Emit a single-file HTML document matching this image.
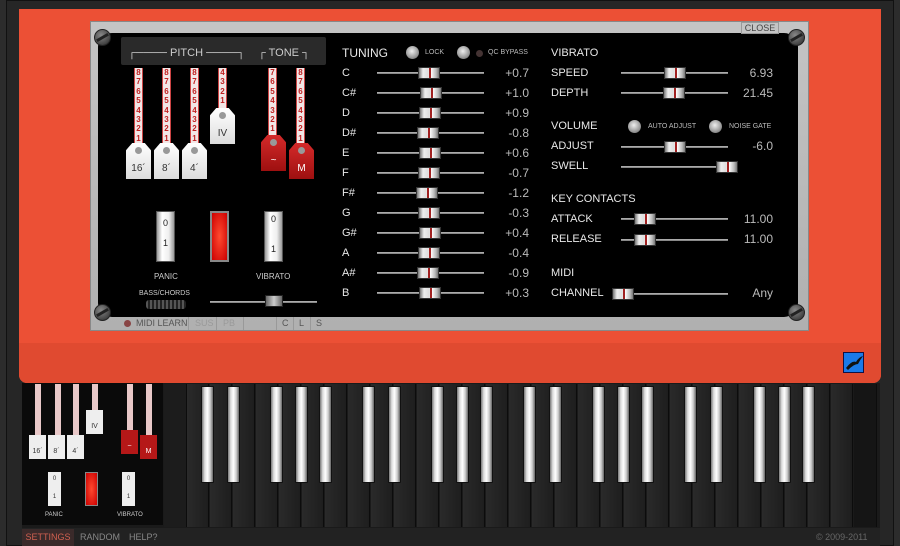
<!DOCTYPE html>
<html><head><meta charset="utf-8"><style>
*{margin:0;padding:0;box-sizing:border-box}
body{width:900px;height:546px;overflow:hidden;background:#2c2c2c;font-family:"Liberation Sans",sans-serif;position:relative}
.a{position:absolute}
.t{position:absolute;color:#e8e8e8;font-size:11px;line-height:12px}
.v{position:absolute;color:#bbb;font-size:12px;line-height:12px;text-align:right;width:60px}
.trk{position:absolute;height:2px;background:#888;border-top:1px solid #aaa}
.th{position:absolute;width:22px;height:12px;background:linear-gradient(90deg,#777,#eee 20%,#ddd 45%,#fff 60%,#bbb 85%,#777);border:1px solid #333}
.th:after{content:"";position:absolute;left:10px;top:0;width:2px;height:10px;background:#a02020}
.scr{position:absolute;width:17px;height:17px;border-radius:50%;background:radial-gradient(circle at 40% 35%,#888,#444 70%,#222);border:1px solid #222}
.scr:after{content:"";position:absolute;left:1px;top:6px;width:13px;height:3px;background:#222;transform:rotate(-30deg)}
.db{position:absolute;width:9px;background:#f2e6e6;border-left:1px solid #c44;border-right:1px solid #c44;color:#c02020;font-size:8px;line-height:9.4px;text-align:center;font-weight:bold}
.tab{position:absolute;width:25px;height:36px;background:linear-gradient(#fff,#ddd);clip-path:polygon(25% 0,75% 0,100% 20%,100% 100%,0 100%,0 20%);color:#333;font-size:10px;text-align:center;padding-top:20px}
.tab.r{background:linear-gradient(#d42a2a,#9e1010);color:#fff}
.tab:before{content:"";position:absolute;left:9px;top:4px;width:7px;height:7px;border-radius:50%;background:#999}
.sw{position:absolute;width:19px;height:51px;background:linear-gradient(90deg,#999,#fff 30%,#eee 70%,#999);border:1px solid #555;font-size:9px;color:#222;text-align:center}
.knob{position:absolute;width:13px;height:13px;border-radius:50%;background:radial-gradient(circle at 45% 40%,#eee,#999 60%,#555);}
.sh{position:absolute;top:386px;width:13px;height:97px;background:linear-gradient(90deg,#777,#ddd 25%,#fff 50%,#ccc 75%,#666);border:1px solid #111;border-radius:1px}
.nk{position:absolute;top:384px;width:22px;height:143px;background:linear-gradient(90deg,#2a2a2a,#1e1e1e);border-right:1px solid #0c0c0c}
.sm{position:absolute;font-size:8px;color:#ccc}
</style></head><body>
<!-- outer frame -->
<div class="a" style="left:6px;top:0;width:888px;height:546px;background:#262626;border:1px solid #111"></div>
<!-- red panel -->
<div class="a" style="left:19px;top:9px;width:862px;height:374px;background:#ec5035;border-radius:0 0 8px 8px"></div>
<div class="a" style="left:19px;top:343px;width:862px;height:40px;background:#e04a30;border-radius:0 0 8px 8px"></div>
<!-- plate -->
<div class="a" style="left:90px;top:21px;width:719px;height:310px;background:linear-gradient(#c4c4c4,#b0b0b0);border:1px solid #888"></div>
<div class="a" style="left:98px;top:33px;width:700px;height:284px;background:#000;border-radius:14px 14px 14px 14px"></div>
<div class="a" style="left:741px;top:22px;width:38px;height:12px;border:1px solid #999;font-size:9px;color:#444;text-align:center;line-height:10px">CLOSE</div>
<div class="scr" style="left:94px;top:29px"></div><div class="scr" style="left:788px;top:29px"></div>
<div class="scr" style="left:94px;top:304px"></div><div class="scr" style="left:788px;top:304px"></div>
<!-- bottom strip -->
<div class="a" style="left:120px;top:317px;width:210px;height:13px;font-size:9px;line-height:13px;color:#555">
<span class="a" style="left:4px;top:3px;width:7px;height:7px;border-radius:50%;background:#844"></span>
<span class="a" style="left:16px">MIDI LEARN</span><span class="a" style="left:68px;border-left:1px solid #999;padding-left:6px;color:#999">SUS</span><span class="a" style="left:96px;border-left:1px solid #999;padding-left:6px;color:#999">PB</span><span class="a" style="left:123px;width:1px;height:13px;background:#999"></span>
<span class="a" style="left:156px;border-left:1px solid #999;padding-left:5px">C</span><span class="a" style="left:173px;border-left:1px solid #999;padding-left:5px">L</span><span class="a" style="left:190px;border-left:1px solid #999;padding-left:5px">S</span></div>
<!-- header box -->
<div class="a" style="left:121px;top:37px;width:205px;height:28px;background:#2a2a2a;border-radius:2px"></div>
<div class="a" style="left:128px;top:47px;color:#ccc;font-size:11px;white-space:pre">┌──── PITCH ────┐</div>
<div class="a" style="left:258px;top:47px;color:#ccc;font-size:11px;white-space:pre">┌ TONE ┐</div>
<!-- drawbars -->
<div class="db" style="left:134px;top:68px;height:76px">8<br>7<br>6<br>5<br>4<br>3<br>2<br>1</div>
<div class="db" style="left:162px;top:68px;height:76px">8<br>7<br>6<br>5<br>4<br>3<br>2<br>1</div>
<div class="db" style="left:190px;top:68px;height:76px">8<br>7<br>6<br>5<br>4<br>3<br>2<br>1</div>
<div class="db" style="left:218px;top:68px;height:40px">4<br>3<br>2<br>1</div>
<div class="db" style="left:268px;top:68px;height:68px">7<br>6<br>5<br>4<br>3<br>2<br>1</div>
<div class="db" style="left:296px;top:68px;height:76px">8<br>7<br>6<br>5<br>4<br>3<br>2<br>1</div>
<div class="tab" style="left:126px;top:143px">16´</div>
<div class="tab" style="left:154px;top:143px">8´</div>
<div class="tab" style="left:182px;top:143px">4´</div>
<div class="tab" style="left:210px;top:108px">IV</div>
<div class="tab r" style="left:261px;top:135px">~</div>
<div class="tab r" style="left:289px;top:143px">M</div>
<!-- switches -->
<div class="sw" style="left:156px;top:211px;padding-top:6px">0<br><br>1</div>
<div class="a" style="left:210px;top:211px;width:19px;height:51px;background:radial-gradient(#ff4a30,#c00);border:2px solid #888"></div>
<div class="sw" style="left:264px;top:211px;padding-top:2px">0<br><br><br>1</div>
<div class="sm" style="left:154px;top:272px">PANIC</div>
<div class="sm" style="left:256px;top:272px">VIBRATO</div>
<div class="a" style="left:139px;top:290px;font-size:7px;color:#ccc">BASS/CHORDS</div>
<div class="a" style="left:146px;top:300px;width:40px;height:9px;background:repeating-linear-gradient(90deg,#555 0 2px,#222 2px 4px);border-radius:3px"></div>
<div class="trk" style="left:210px;top:301px;width:107px"></div>
<div class="a" style="left:265px;top:295px;width:18px;height:12px;background:linear-gradient(90deg,#666,#ccc,#666);border:1px solid #222"></div>
<!-- tuning -->
<div class="t" style="left:342px;top:47px;font-size:12px">TUNING</div>
<div class="knob" style="left:406px;top:46px"></div><div class="a" style="left:425px;top:49px;font-size:7px;color:#bbb">LOCK</div>
<div class="knob" style="left:457px;top:46px"></div><div class="a" style="left:476px;top:50px;width:7px;height:7px;border-radius:50%;background:#433"></div><div class="a" style="left:488px;top:49px;font-size:7px;color:#bbb">QC BYPASS</div>
<div class="t" style="left:342px;top:67px">C</div><div class="trk" style="left:377px;top:72px;width:107px"></div><div class="th" style="left:418px;top:67px"></div><div class="v" style="left:469px;top:67px">+0.7</div>
<div class="t" style="left:342px;top:87px">C#</div><div class="trk" style="left:377px;top:92px;width:107px"></div><div class="th" style="left:420px;top:87px"></div><div class="v" style="left:469px;top:87px">+1.0</div>
<div class="t" style="left:342px;top:107px">D</div><div class="trk" style="left:377px;top:112px;width:107px"></div><div class="th" style="left:419px;top:107px"></div><div class="v" style="left:469px;top:107px">+0.9</div>
<div class="t" style="left:342px;top:127px">D#</div><div class="trk" style="left:377px;top:132px;width:107px"></div><div class="th" style="left:417px;top:127px"></div><div class="v" style="left:469px;top:127px">-0.8</div>
<div class="t" style="left:342px;top:147px">E</div><div class="trk" style="left:377px;top:152px;width:107px"></div><div class="th" style="left:419px;top:147px"></div><div class="v" style="left:469px;top:147px">+0.6</div>
<div class="t" style="left:342px;top:167px">F</div><div class="trk" style="left:377px;top:172px;width:107px"></div><div class="th" style="left:418px;top:167px"></div><div class="v" style="left:469px;top:167px">-0.7</div>
<div class="t" style="left:342px;top:187px">F#</div><div class="trk" style="left:377px;top:192px;width:107px"></div><div class="th" style="left:416px;top:187px"></div><div class="v" style="left:469px;top:187px">-1.2</div>
<div class="t" style="left:342px;top:207px">G</div><div class="trk" style="left:377px;top:212px;width:107px"></div><div class="th" style="left:418px;top:207px"></div><div class="v" style="left:469px;top:207px">-0.3</div>
<div class="t" style="left:342px;top:227px">G#</div><div class="trk" style="left:377px;top:232px;width:107px"></div><div class="th" style="left:419px;top:227px"></div><div class="v" style="left:469px;top:227px">+0.4</div>
<div class="t" style="left:342px;top:247px">A</div><div class="trk" style="left:377px;top:252px;width:107px"></div><div class="th" style="left:418px;top:247px"></div><div class="v" style="left:469px;top:247px">-0.4</div>
<div class="t" style="left:342px;top:267px">A#</div><div class="trk" style="left:377px;top:272px;width:107px"></div><div class="th" style="left:417px;top:267px"></div><div class="v" style="left:469px;top:267px">-0.9</div>
<div class="t" style="left:342px;top:287px">B</div><div class="trk" style="left:377px;top:292px;width:107px"></div><div class="th" style="left:419px;top:287px"></div><div class="v" style="left:469px;top:287px">+0.3</div>
<!-- right -->
<div class="t" style="left:551px;top:47px">VIBRATO</div>
<div class="t" style="left:551px;top:67px">SPEED</div><div class="trk" style="left:621px;top:72px;width:107px"></div><div class="th" style="left:664px;top:67px"></div><div class="v" style="left:713px;top:67px">6.93</div>
<div class="t" style="left:551px;top:87px">DEPTH</div><div class="trk" style="left:621px;top:92px;width:107px"></div><div class="th" style="left:663px;top:87px"></div><div class="v" style="left:713px;top:87px">21.45</div>
<div class="t" style="left:551px;top:120px">VOLUME</div>
<div class="knob" style="left:628px;top:120px"></div><div class="a" style="left:648px;top:123px;font-size:7px;color:#bbb">AUTO ADJUST</div>
<div class="knob" style="left:709px;top:120px"></div><div class="a" style="left:729px;top:123px;font-size:7px;color:#bbb">NOISE GATE</div>
<div class="t" style="left:551px;top:140px">ADJUST</div><div class="trk" style="left:621px;top:146px;width:107px"></div><div class="th" style="left:664px;top:141px"></div><div class="v" style="left:713px;top:140px">-6.0</div>
<div class="t" style="left:551px;top:160px">SWELL</div><div class="trk" style="left:621px;top:166px;width:107px"></div><div class="th" style="left:716px;top:161px"></div>
<div class="t" style="left:551px;top:193px">KEY CONTACTS</div>
<div class="t" style="left:551px;top:213px">ATTACK</div><div class="trk" style="left:621px;top:218px;width:107px"></div><div class="th" style="left:634px;top:213px"></div><div class="v" style="left:713px;top:213px">11.00</div>
<div class="t" style="left:551px;top:233px">RELEASE</div><div class="trk" style="left:621px;top:239px;width:107px"></div><div class="th" style="left:634px;top:234px"></div><div class="v" style="left:713px;top:233px">11.00</div>
<div class="t" style="left:551px;top:267px">MIDI</div>
<div class="t" style="left:551px;top:287px">CHANNEL</div><div class="trk" style="left:621px;top:293px;width:107px"></div><div class="th" style="left:612px;top:288px"></div><div class="v" style="left:713px;top:287px">Any</div>
<!-- blue icon -->
<div class="a" style="left:843px;top:352px;width:21px;height:21px;background:#1a7ae8;border:1px solid #114"></div>
<svg class="a" style="left:844px;top:354px" width="20" height="18"><path d="M2 14 Q8 6 12 8 Q15 3 19 2 Q16 6 14 10 Q10 10 4 16Z" fill="#111"/></svg>
<!-- keyboard bg -->
<div class="a" style="left:22px;top:383px;width:858px;height:145px;background:#1a1a1a"></div>
<div class="a" style="left:22px;top:383px;width:141px;height:142px;background:#0a0a0a"></div>
<div class="nk" style="left:164px;width:23px;background:#1c1c1c"></div>
<div class="nk" style="left:187px"></div><div class="nk" style="left:210px"></div><div class="nk" style="left:233px"></div><div class="nk" style="left:256px"></div><div class="nk" style="left:279px"></div><div class="nk" style="left:302px"></div><div class="nk" style="left:325px"></div><div class="nk" style="left:348px"></div><div class="nk" style="left:371px"></div><div class="nk" style="left:394px"></div><div class="nk" style="left:417px"></div><div class="nk" style="left:440px"></div><div class="nk" style="left:463px"></div><div class="nk" style="left:486px"></div><div class="nk" style="left:509px"></div><div class="nk" style="left:532px"></div><div class="nk" style="left:555px"></div><div class="nk" style="left:578px"></div><div class="nk" style="left:601px"></div><div class="nk" style="left:624px"></div><div class="nk" style="left:647px"></div><div class="nk" style="left:670px"></div><div class="nk" style="left:693px"></div><div class="nk" style="left:716px"></div><div class="nk" style="left:739px"></div><div class="nk" style="left:762px"></div><div class="nk" style="left:785px"></div><div class="nk" style="left:808px"></div><div class="nk" style="left:831px"></div><div class="nk" style="left:854px;width:23px;background:#151515"></div>
<div class="sh" style="left:201px"></div><div class="sh" style="left:227px"></div><div class="sh" style="left:270px"></div><div class="sh" style="left:295px"></div><div class="sh" style="left:319px"></div><div class="sh" style="left:362px"></div><div class="sh" style="left:388px"></div><div class="sh" style="left:431px"></div><div class="sh" style="left:456px"></div><div class="sh" style="left:480px"></div><div class="sh" style="left:523px"></div><div class="sh" style="left:549px"></div><div class="sh" style="left:592px"></div><div class="sh" style="left:617px"></div><div class="sh" style="left:641px"></div><div class="sh" style="left:684px"></div><div class="sh" style="left:710px"></div><div class="sh" style="left:753px"></div><div class="sh" style="left:778px"></div><div class="sh" style="left:802px"></div>
<!-- mini panel -->
<div class="a" style="left:35px;top:384px;width:6px;height:52px;background:#e8c8c8"></div>
<div class="a" style="left:55px;top:384px;width:6px;height:52px;background:#e8c8c8"></div>
<div class="a" style="left:73px;top:384px;width:6px;height:52px;background:#e8c8c8"></div>
<div class="a" style="left:92px;top:384px;width:6px;height:26px;background:#e8c8c8"></div>
<div class="a" style="left:127px;top:384px;width:6px;height:46px;background:#e8c8c8"></div>
<div class="a" style="left:146px;top:384px;width:6px;height:52px;background:#e8c8c8"></div>
<div class="a" style="left:29px;top:435px;width:17px;height:24px;background:#eee;font-size:7px;color:#333;text-align:center;padding-top:13px">16´</div>
<div class="a" style="left:48px;top:435px;width:17px;height:24px;background:#eee;font-size:7px;color:#333;text-align:center;padding-top:13px">8´</div>
<div class="a" style="left:67px;top:435px;width:17px;height:24px;background:#eee;font-size:7px;color:#333;text-align:center;padding-top:13px">4´</div>
<div class="a" style="left:86px;top:410px;width:17px;height:24px;background:#eee;font-size:7px;color:#333;text-align:center;padding-top:13px">IV</div>
<div class="a" style="left:121px;top:430px;width:17px;height:24px;background:#b51818;font-size:7px;color:#fff;text-align:center;padding-top:13px">~</div>
<div class="a" style="left:140px;top:435px;width:17px;height:24px;background:#b51818;font-size:7px;color:#fff;text-align:center;padding-top:13px">M</div>
<div class="a" style="left:48px;top:472px;width:13px;height:34px;background:#eee;font-size:6px;color:#333;text-align:center;padding-top:3px;line-height:9px">0<br><br>1</div>
<div class="a" style="left:85px;top:472px;width:13px;height:34px;background:radial-gradient(#ff4a30,#c00);border:1px solid #888"></div>
<div class="a" style="left:122px;top:472px;width:13px;height:34px;background:#eee;font-size:6px;color:#333;text-align:center;padding-top:3px;line-height:9px">0<br><br>1</div>
<div class="a" style="left:45px;top:512px;font-size:6px;color:#ccc">PANIC</div>
<div class="a" style="left:117px;top:512px;font-size:6px;color:#ccc">VIBRATO</div>
<!-- bottom bar -->
<div class="a" style="left:22px;top:528px;width:858px;height:18px;background:#222"></div>
<div class="a" style="left:22px;top:529px;width:52px;height:17px;background:#3a2a2a;color:#d06050;font-size:9px;line-height:17px;text-align:center">SETTINGS</div>
<div class="a" style="left:80px;top:529px;color:#888;font-size:9px;line-height:17px">RANDOM</div>
<div class="a" style="left:129px;top:529px;color:#888;font-size:9px;line-height:17px">HELP?</div>
<div class="a" style="left:816px;top:529px;color:#666;font-size:9px;line-height:17px">© 2009-2011</div>
</body></html>
